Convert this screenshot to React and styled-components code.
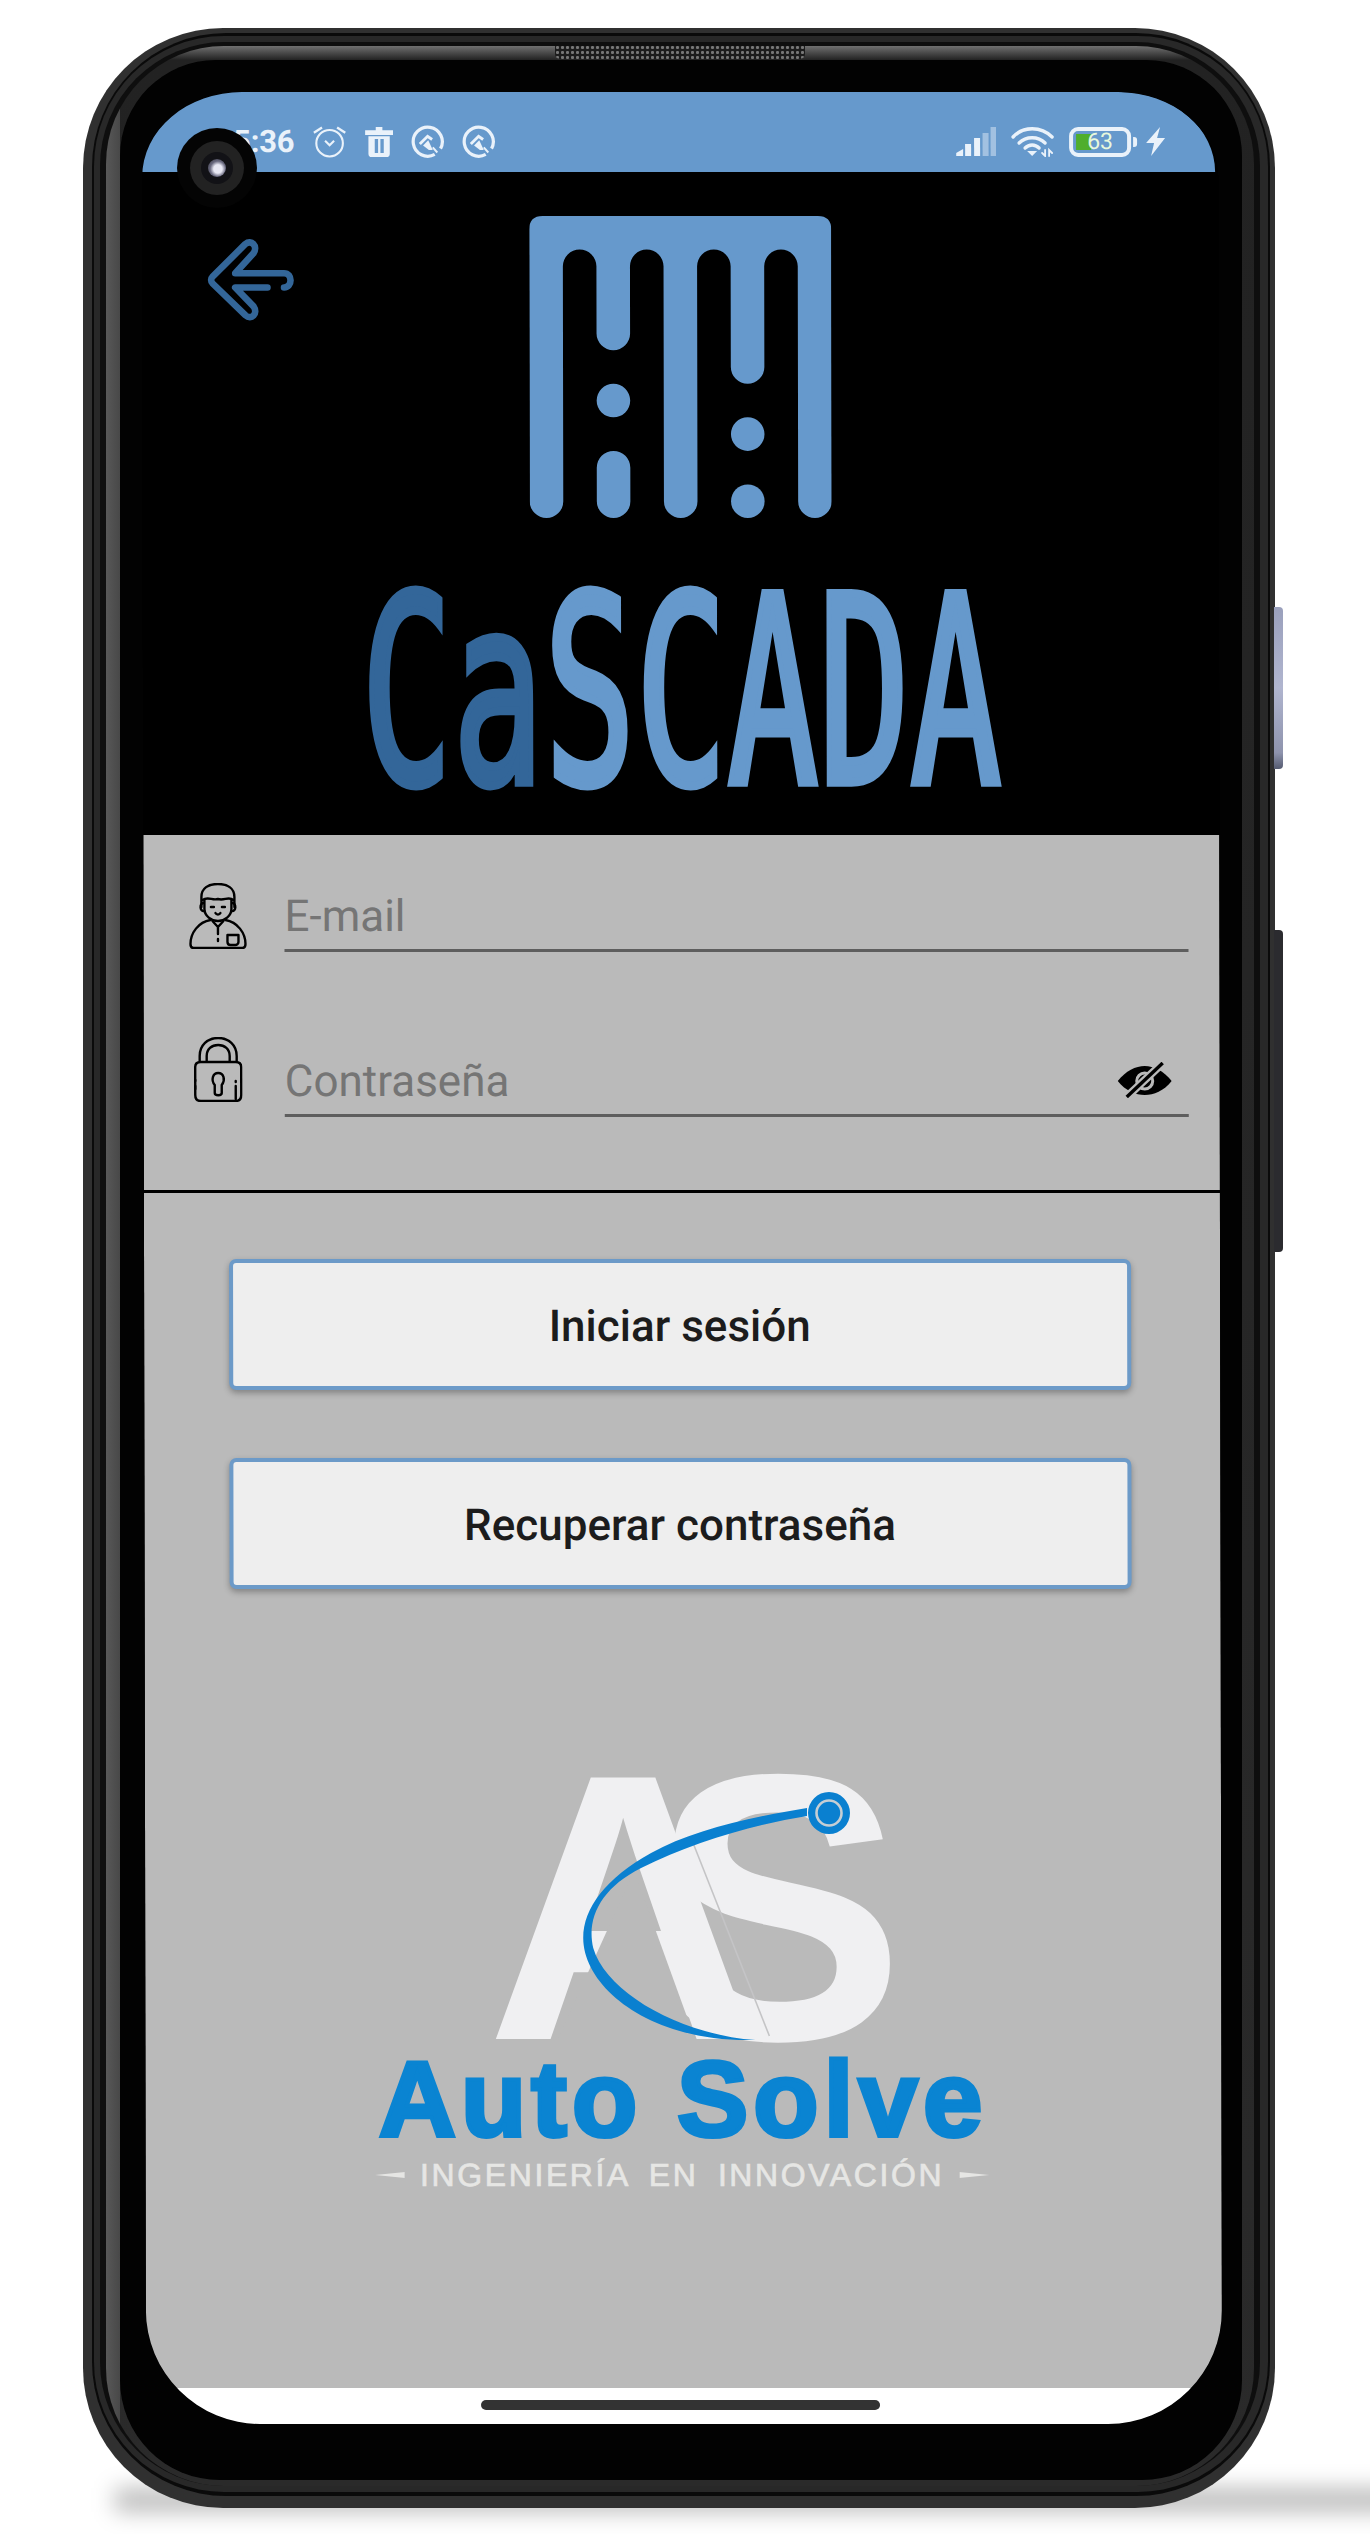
import React from "react";
import styled, { createGlobalStyle } from "styled-components";

const Global = createGlobalStyle`
  html, body { margin: 0; padding: 0; background: #fff; }
  body { width: 1370px; height: 2534px; overflow: hidden; font-family: Roboto, "Liberation Sans", sans-serif; }
`;

const Stage = styled.div`
  position: relative;
  width: 1370px;
  height: 2534px;
  box-sizing: border-box;
  padding: 28px 95px 26px 83px;
  display: flex;
  overflow: hidden;
  background: #fff;
  &::before {
    content: "";
    position: absolute;
    left: 115px;
    right: -60px;
    top: 2488px;
    height: 24px;
    background: rgba(0, 0, 0, 0.26);
    filter: blur(11px);
  }
`;

const SideKey = styled.div`
  position: absolute;
  right: -8px;
  top: ${(p) => p.$top}px;
  width: 9px;
  height: ${(p) => p.$h}px;
  border-radius: 0 4px 4px 0;
  background: ${(p) => p.$bg};
`;

const Ring = styled.div`
  position: relative;
  flex: 1;
  display: flex;
  min-width: 0;
  box-sizing: border-box;
  padding: ${(p) => p.$pad};
  background: ${(p) => p.$bg};
  border-radius: ${(p) => p.$radius}px;
`;

const Bezel = styled.div`
  position: relative;
  flex: 1;
  display: flex;
  align-items: flex-start;
  box-sizing: border-box;
  padding: 32px 0 0 22px;
  background: #020202;
  border-radius: 96px 96px 100px 100px;
`;

const Speaker = styled.div`
  position: absolute;
  left: 50%;
  top: 0;
  width: 250px;
  height: 13px;
  margin-left: -125px;
  border-radius: 0 0 5px 5px;
  background-color: #1c1c1c;
  background-image: radial-gradient(circle, #777 0 1.3px, transparent 1.7px);
  background-size: 5px 5px;
  background-position: 0 4px;
  z-index: 2;
`;

const Camera = styled.div`
  position: absolute;
  left: 57px;
  top: 68px;
  width: 80px;
  height: 80px;
  border-radius: 50%;
  background: #040404;
  display: flex;
  align-items: center;
  justify-content: center;
  z-index: 3;
`;
const CameraRing = styled.div`
  width: 54px;
  height: 54px;
  border-radius: 50%;
  background: #222;
  display: flex;
  align-items: center;
  justify-content: center;
`;
const CameraCore = styled.div`
  width: 32px;
  height: 32px;
  border-radius: 50%;
  background: #121216;
  display: flex;
  align-items: center;
  justify-content: center;
`;
const Lens = styled.div`
  width: 18px;
  height: 18px;
  border-radius: 50%;
  background: radial-gradient(circle at 55% 55%, #e8e8f4 0 30%, #6a6a80 55%, #2a2a33 100%);
`;

const Screen = styled.div`
  width: 1076px;
  height: 2332px;
  flex: none;
  display: flex;
  flex-direction: column;
  overflow: hidden;
  background: #000;
  border-radius: 100px 100px 114px 114px / 85px 85px 114px 114px;
  transform: skewX(0.1deg);
  transform-origin: 0 0;
`;

const StatusBar = styled.div`
  height: 80px;
  flex: none;
  box-sizing: border-box;
  margin-right: 3px;
  padding: 0 50px 15px 91px;
  display: flex;
  align-items: flex-end;
  justify-content: space-between;
  background: #6699cc;
  border-top-right-radius: 100px 85px;
  color: #eaf2fa;
`;
const StatusGroup = styled.div`
  display: flex;
  align-items: center;
  gap: ${(p) => p.$gap}px;
  height: 31px;
`;
const Time = styled.span`
  font: 700 31px/31px Roboto, sans-serif;
  letter-spacing: -0.2px;
`;
const Battery = styled.div`
  position: relative;
  width: 62px;
  height: 30px;
  box-sizing: border-box;
  border: 4px solid #eaf2fa;
  border-radius: 9px;
  display: flex;
  align-items: center;
  justify-content: center;
  &::after {
    content: "";
    position: absolute;
    right: -10px;
    top: 6px;
    width: 4px;
    height: 10px;
    border-radius: 0 3px 3px 0;
    background: #eaf2fa;
  }
`;
const BatteryFill = styled.div`
  position: absolute;
  left: 3px;
  top: 3px;
  bottom: 3px;
  width: ${(p) => p.$w}px;
  background: #4fae2c;
`;
const BatteryLabel = styled.span`
  position: relative;
  font: 400 23px/22px Roboto, sans-serif;
  color: #e8f8dc;
`;

const Header = styled.div`
  height: 663px;
  flex: none;
  box-sizing: border-box;
  padding-top: 44px;
  display: grid;
  grid-template-columns: 1fr 636px 1fr;
  align-items: start;
  background: #000;
`;
const BackIcon = styled.svg`
  display: block;
  width: 93px;
  height: 87px;
  margin: 22px 0 0 63px;
`;
const Brand = styled.div`
  display: flex;
  flex-direction: column;
  align-items: center;
`;
const Wordmark = styled.div`
  width: 636px;
  height: 201px;
  margin-top: 81px;
  margin-left: -3px;
  white-space: nowrap;
  color: #6699cc;
  font: 400 150px/109px "DejaVu Sans Mono", monospace;
  letter-spacing: 1.2px;
  -webkit-text-stroke: 5px currentColor;
  transform: scaleY(1.73);
  transform-origin: 50% 0;
`;
const WordmarkDark = styled.span`
  color: #336699;
`;

const FormPanel = styled.div`
  height: 355px;
  flex: none;
  box-sizing: border-box;
  padding: 47px 31px 0 45px;
  display: flex;
  flex-direction: column;
  gap: 85px;
  background: #bababa;
`;
const FormRow = styled.div`
  height: ${(p) => p.$h}px;
  display: grid;
  grid-template-columns: 59px 1fr;
  column-gap: 37px;
  align-items: end;
`;
const RowIcon = styled.svg`
  display: block;
  justify-self: center;
  margin-bottom: ${(p) => p.$mb}px;
`;
const Field = styled.div`
  display: flex;
  align-items: flex-end;
  justify-content: space-between;
  box-sizing: border-box;
  border-bottom: 3px solid #5e5e5e;
  padding: 0 17px 11px 0;
`;
const Placeholder = styled.span`
  font: 400 44px/44px Roboto, sans-serif;
  color: #757575;
`;
const EyeIcon = styled.svg`
  display: block;
  margin-bottom: 5px;
`;
const Divider = styled.div`
  height: 3px;
  flex: none;
  background: #000;
`;
const LowerPanel = styled.div`
  flex: 1;
  box-sizing: border-box;
  padding: 66px 5px 0 0;
  display: flex;
  flex-direction: column;
  align-items: center;
  background: #bababa;
`;
const ActionButton = styled.button`
  width: 902px;
  height: 131px;
  flex: none;
  box-sizing: border-box;
  margin-bottom: 68px;
  padding: 2px 0 0;
  border: 4px solid #6c9ac8;
  border-radius: 7px;
  background: #eeeeee;
  box-shadow: 0 3px 6px rgba(0, 0, 0, 0.3);
  color: #1c1c1c;
  font: 500 44px/50px Roboto, sans-serif;
`;
const MarkSvg = styled.svg`
  display: block;
  flex: none;
  margin-top: 114px;
  overflow: visible;
`;
const CompanyName = styled.div`
  margin: -1px 0 0 4px;
  color: #0a84d2;
  font: 700 107px/107px "Liberation Sans", Arial, sans-serif;
  letter-spacing: 5px;
  -webkit-text-stroke: 4px #0a84d2;
  white-space: nowrap;
`;
const TaglineRow = styled.div`
  margin: 6px 0 0 2px;
  display: flex;
  align-items: center;
  gap: 15px;
`;
const Tagline = styled.span`
  color: #e6e6e4;
  font: 400 32px/32px "Liberation Sans", Arial, sans-serif;
  letter-spacing: 2.6px;
  word-spacing: 8px;
  -webkit-text-stroke: 0.7px #e6e6e4;
  white-space: nowrap;
`;
const TagDash = styled.span`
  display: block;
  width: 30px;
  height: 6px;
  background: #e6e6e4;
  clip-path: ${(p) =>
    p.$flip
      ? "polygon(0 0, 100% 50%, 0 100%)"
      : "polygon(0 50%, 100% 0, 100% 100%)"};
`;
const HomeArea = styled.div`
  height: 36px;
  flex: none;
  display: flex;
  align-items: center;
  justify-content: center;
  padding: 0 7px 2px 0;
  box-sizing: border-box;
  background: #fff;
`;
const HomeBar = styled.div`
  width: 399px;
  height: 10px;
  border-radius: 5px;
  background: #333;
`;

const AlarmGlyph = () => (
  <svg width="35" height="36" viewBox="572 130 116 112" fill="none" stroke="currentColor" strokeWidth="7">
    <circle cx="630" cy="190" r="44" />
    <path d="M578 155 L605 138 M655 138 L682 155" strokeWidth="8" />
    <path d="M615 182 L630 197 L645 182" />
  </svg>
);
const TrashGlyph = () => (
  <svg width="28" height="30" viewBox="738 138 84 90" fill="currentColor">
    <path
      fillRule="evenodd"
      d="M770 138 H790 V148 H822 V162 H738 V148 H770 Z M748 166 H812 V218 Q812 228 802 228 H758 Q748 228 748 218 Z M767 174 V216 H777 V174 Z M784 174 V216 H794 V174 Z"
    />
  </svg>
);
const QGlyph = () => (
  <svg width="33" height="33" viewBox="-51 -51 102 102" fill="none" stroke="currentColor" strokeWidth="10">
    <path d="M22 40 A45 45 0 1 1 40 22" />
    <path d="M-24 8 L0 -16 L14 -6" strokeWidth="9" />
    <path d="M-14 12 L2 -4 L16 26 L4 26 Z" fill="currentColor" stroke="none" />
    <path d="M16 18 L30 34" strokeWidth="6" />
  </svg>
);
const SignalGlyph = () => (
  <svg width="40" height="29" viewBox="0 0 40 29" fill="currentColor">
    <path d="M0 29 V26 L7 22 V29 Z" />
    <rect x="9" y="17" width="6" height="12" />
    <rect x="18" y="11" width="6" height="18" />
    <rect x="26.5" y="6" width="6" height="23" opacity="0.45" />
    <rect x="34.5" y="0" width="5.5" height="29" opacity="0.45" />
  </svg>
);
const WifiGlyph = () => (
  <svg width="43" height="31" viewBox="0 0 43 31" fill="none" stroke="currentColor" strokeWidth="3.4" strokeLinecap="round">
    <path d="M2 11 C12 0 30 0 41 11" />
    <path d="M8 17 C15 10 27 10 34 17" />
    <path d="M14 22 C18 18 24 18 28 22" />
    <path d="M21 30 L16 25 H26 Z" fill="currentColor" stroke="none" />
    <path d="M34 24 V30 L31 27 M38 30 V24 L41 27" strokeWidth="1.8" />
  </svg>
);
const BoltGlyph = () => (
  <svg width="19" height="29" viewBox="0 0 19 29" fill="currentColor">
    <path d="M14 0 L0 16 H8 L5 29 L19 11 H11 Z" />
  </svg>
);
const LogoTop = () => (
  <svg width="302" height="302" viewBox="0 0 90 90" fill="#6699cc">
    <path d="M0 4 Q0 0 4 0 H86 Q90 0 90 4 V85 A5 5 0 0 1 80 85 V15 A5 5 0 0 0 70 15 V45 A5 5 0 0 1 60 45 V15 A5 5 0 0 0 50 15 V85 A5 5 0 0 1 40 85 V15 A5 5 0 0 0 30 15 V35 A5 5 0 0 1 20 35 V15 A5 5 0 0 0 10 15 V85 A5 5 0 0 1 0 85 Z" />
    <circle cx="25" cy="55" r="5" />
    <rect x="20" y="70" width="10" height="20" rx="5" />
    <circle cx="65" cy="65" r="5" />
    <circle cx="65" cy="85" r="5" />
  </svg>
);

export default function App() {
  return (
    <Stage>
      <Global />
      <Ring $pad="5px 5px 12px 9px" $bg="#303030" $radius={140}>
        <SideKey $top={579} $h={162} $bg="linear-gradient(180deg,#9aa0bc,#b0b5cf 50%,#8e93ad 90%,#555b70)" />
        <SideKey $top={902} $h={322} $bg="#2b2b2f" />
        <Ring $pad="3px 2px 4px 2px" $bg="#0a0a0a" $radius={134}>
          <Ring $pad="6px 8px 6px 6px" $bg="#282828" $radius={130}>
            <Ring $pad="4px 6px 0 6px" $bg="#0e0e0e" $radius={124}>
              <Ring
                $pad="14px 12px 6px 14px"
                $bg="linear-gradient(90deg,#585858 0,#484848 14px,transparent 14px),linear-gradient(180deg,#707070 0,#222 14px,#2a2a2a 100%)"
                $radius={118}
              >
                <Speaker />
                <Bezel>
                  <Camera>
                    <CameraRing>
                      <CameraCore>
                        <Lens />
                      </CameraCore>
                    </CameraRing>
                  </Camera>
                  <Screen>
                    <StatusBar>
                      <StatusGroup $gap={18}>
                        <Time>5:36</Time>
                        <AlarmGlyph />
                        <TrashGlyph />
                        <QGlyph />
                        <QGlyph />
                      </StatusGroup>
                      <StatusGroup $gap={15}>
                        <SignalGlyph />
                        <WifiGlyph />
                        <Battery>
                          <BatteryFill $w={15} />
                          <BatteryLabel>63</BatteryLabel>
                        </Battery>
                        <BoltGlyph />
                      </StatusGroup>
                    </StatusBar>
                    <Header>
                      <BackIcon viewBox="255 480 280 260" fill="none" stroke="#336699" strokeWidth="20" strokeLinecap="round" strokeLinejoin="round">
                        <path d="M492 628 C518 628 518 585 492 585 H345 L400 525 C415 503 393 483 376 497 L277 595 C271 601 271 610 277 616 L376 712 C393 727 415 707 400 685 L345 628 H442" />
                      </BackIcon>
                      <Brand>
                        <LogoTop />
                        <Wordmark>
                          <WordmarkDark>Ca</WordmarkDark>SCADA
                        </Wordmark>
                      </Brand>
                    </Header>
                    <FormPanel>
                      <FormRow $h={70}>
                        <RowIcon $mb={3} width="59" height="66" viewBox="0 0 59 66" fill="none" stroke="#000" strokeWidth="2.4" strokeLinecap="round" strokeLinejoin="round">
                          <path d="M13 24 V14 C13 5 20 1 29.5 1 C39 1 46 5 46 14 V24" />
                          <path d="M14 17 C20 13 24 18 29.5 16 C36 18 40 13 45 17" />
                          <path d="M16 17 V26 C16 33 23 38 29.5 38 C36 38 43 33 43 26 V17" />
                          <path d="M15 20 C11 20 11 29 16 28 M44 20 C48 20 48 29 43 28" />
                          <path d="M22 37 C10 39 2 50 2 61 C2 64 3 65 5 65 H54 C56 65 57 64 57 61 C57 50 49 39 37 37" />
                          <path d="M24 38 L29.5 44 L35 38 M29.5 44 V51 M29.5 56 V58" />
                          <path d="M39 52 H50 V59 C50 61 48 62 47 62 H42 C40 62 39 61 39 59 Z" />
                          <path d="M22.5 24 H25.5 M33.5 24 H36.5 M27 30 C28 32 31 32 32 30" />
                        </RowIcon>
                        <Field>
                          <Placeholder>E-mail</Placeholder>
                        </Field>
                      </FormRow>
                      <FormRow $h={80}>
                        <RowIcon $mb={15} width="49" height="65" viewBox="0 0 49 65" fill="none" stroke="#000" strokeWidth="2.4" strokeLinecap="round" strokeLinejoin="round">
                          <path d="M6 24 V19 C6 8 14 1 24.5 1 C35 1 43 8 43 19 V24" />
                          <path d="M13 24 V19 C13 12 18 8 24.5 8 C31 8 36 12 36 19 V24" />
                          <path d="M7 25 H42 C45.5 25 47.5 27 47.5 30 V58 C47.5 62 45.5 64 42 64 H7 C3.5 64 1.5 62 1.5 58 V30 C1.5 27 3.5 25 7 25 Z" />
                          <path d="M21 48 C17 43 19 36 24.5 36 C30 36 32 43 28 48 V56 C28 59 21 59 21 56 Z" />
                          <path d="M1.5 43 V44 M1.5 49 V52 M42 49 V62 M42 44 V45" />
                        </RowIcon>
                        <Field>
                          <Placeholder>Contraseña</Placeholder>
                          <EyeIcon width="54" height="36" viewBox="0 0 54 36">
                            <path d="M0 19 C8 9 18 4 27 4 C36 4 46 9 54 19 C46 29 36 33 27 33 C18 33 8 29 0 19 Z" fill="#000" />
                            <circle cx="27" cy="19" r="8" fill="none" stroke="#bababa" strokeWidth="3" />
                            <path d="M9 35 L45 1" stroke="#bababa" strokeWidth="8" />
                            <path d="M9 35 L45 1" stroke="#000" strokeWidth="3.4" />
                          </EyeIcon>
                        </Field>
                      </FormRow>
                    </FormPanel>
                    <Divider />
                    <LowerPanel>
                      <ActionButton>Iniciar sesión</ActionButton>
                      <ActionButton>Recuperar contraseña</ActionButton>
                      <MarkSvg width="416" height="276" viewBox="472 1768 416 276">
                        <text x="650 485" y="2036" fontFamily="Liberation Sans" fontWeight="700" fontSize="380" fill="#f0f0f2">SA</text>
                        <polygon points="556,2037 633,1868 694,2037" fill="#bababa" />
                        <path d="M692 1840 L768 2033" stroke="#c4c4c6" strokeWidth="1.6" fill="none" />
                        <path d="M806 1805 C745 1815 690 1828 650 1850 C605 1875 582 1905 582 1935 C582 1985 650 2040 754 2037 C680 2032 605 1990 592 1945 C585 1915 600 1885 640 1865 C690 1840 750 1822 806 1813 Z" fill="#0a80d0" />
                        <circle cx="828" cy="1810" r="21" fill="#0a80d0" />
                        <circle cx="828" cy="1810" r="12.5" fill="#0a80d0" stroke="#c6ced4" strokeWidth="2.6" />
                      </MarkSvg>
                      <CompanyName>Auto Solve</CompanyName>
                      <TaglineRow>
                        <TagDash />
                        <Tagline>INGENIERÍA EN INNOVACIÓN</Tagline>
                        <TagDash $flip />
                      </TaglineRow>
                    </LowerPanel>
                    <HomeArea>
                      <HomeBar />
                    </HomeArea>
                  </Screen>
                </Bezel>
              </Ring>
            </Ring>
          </Ring>
        </Ring>
      </Ring>
    </Stage>
  );
}
